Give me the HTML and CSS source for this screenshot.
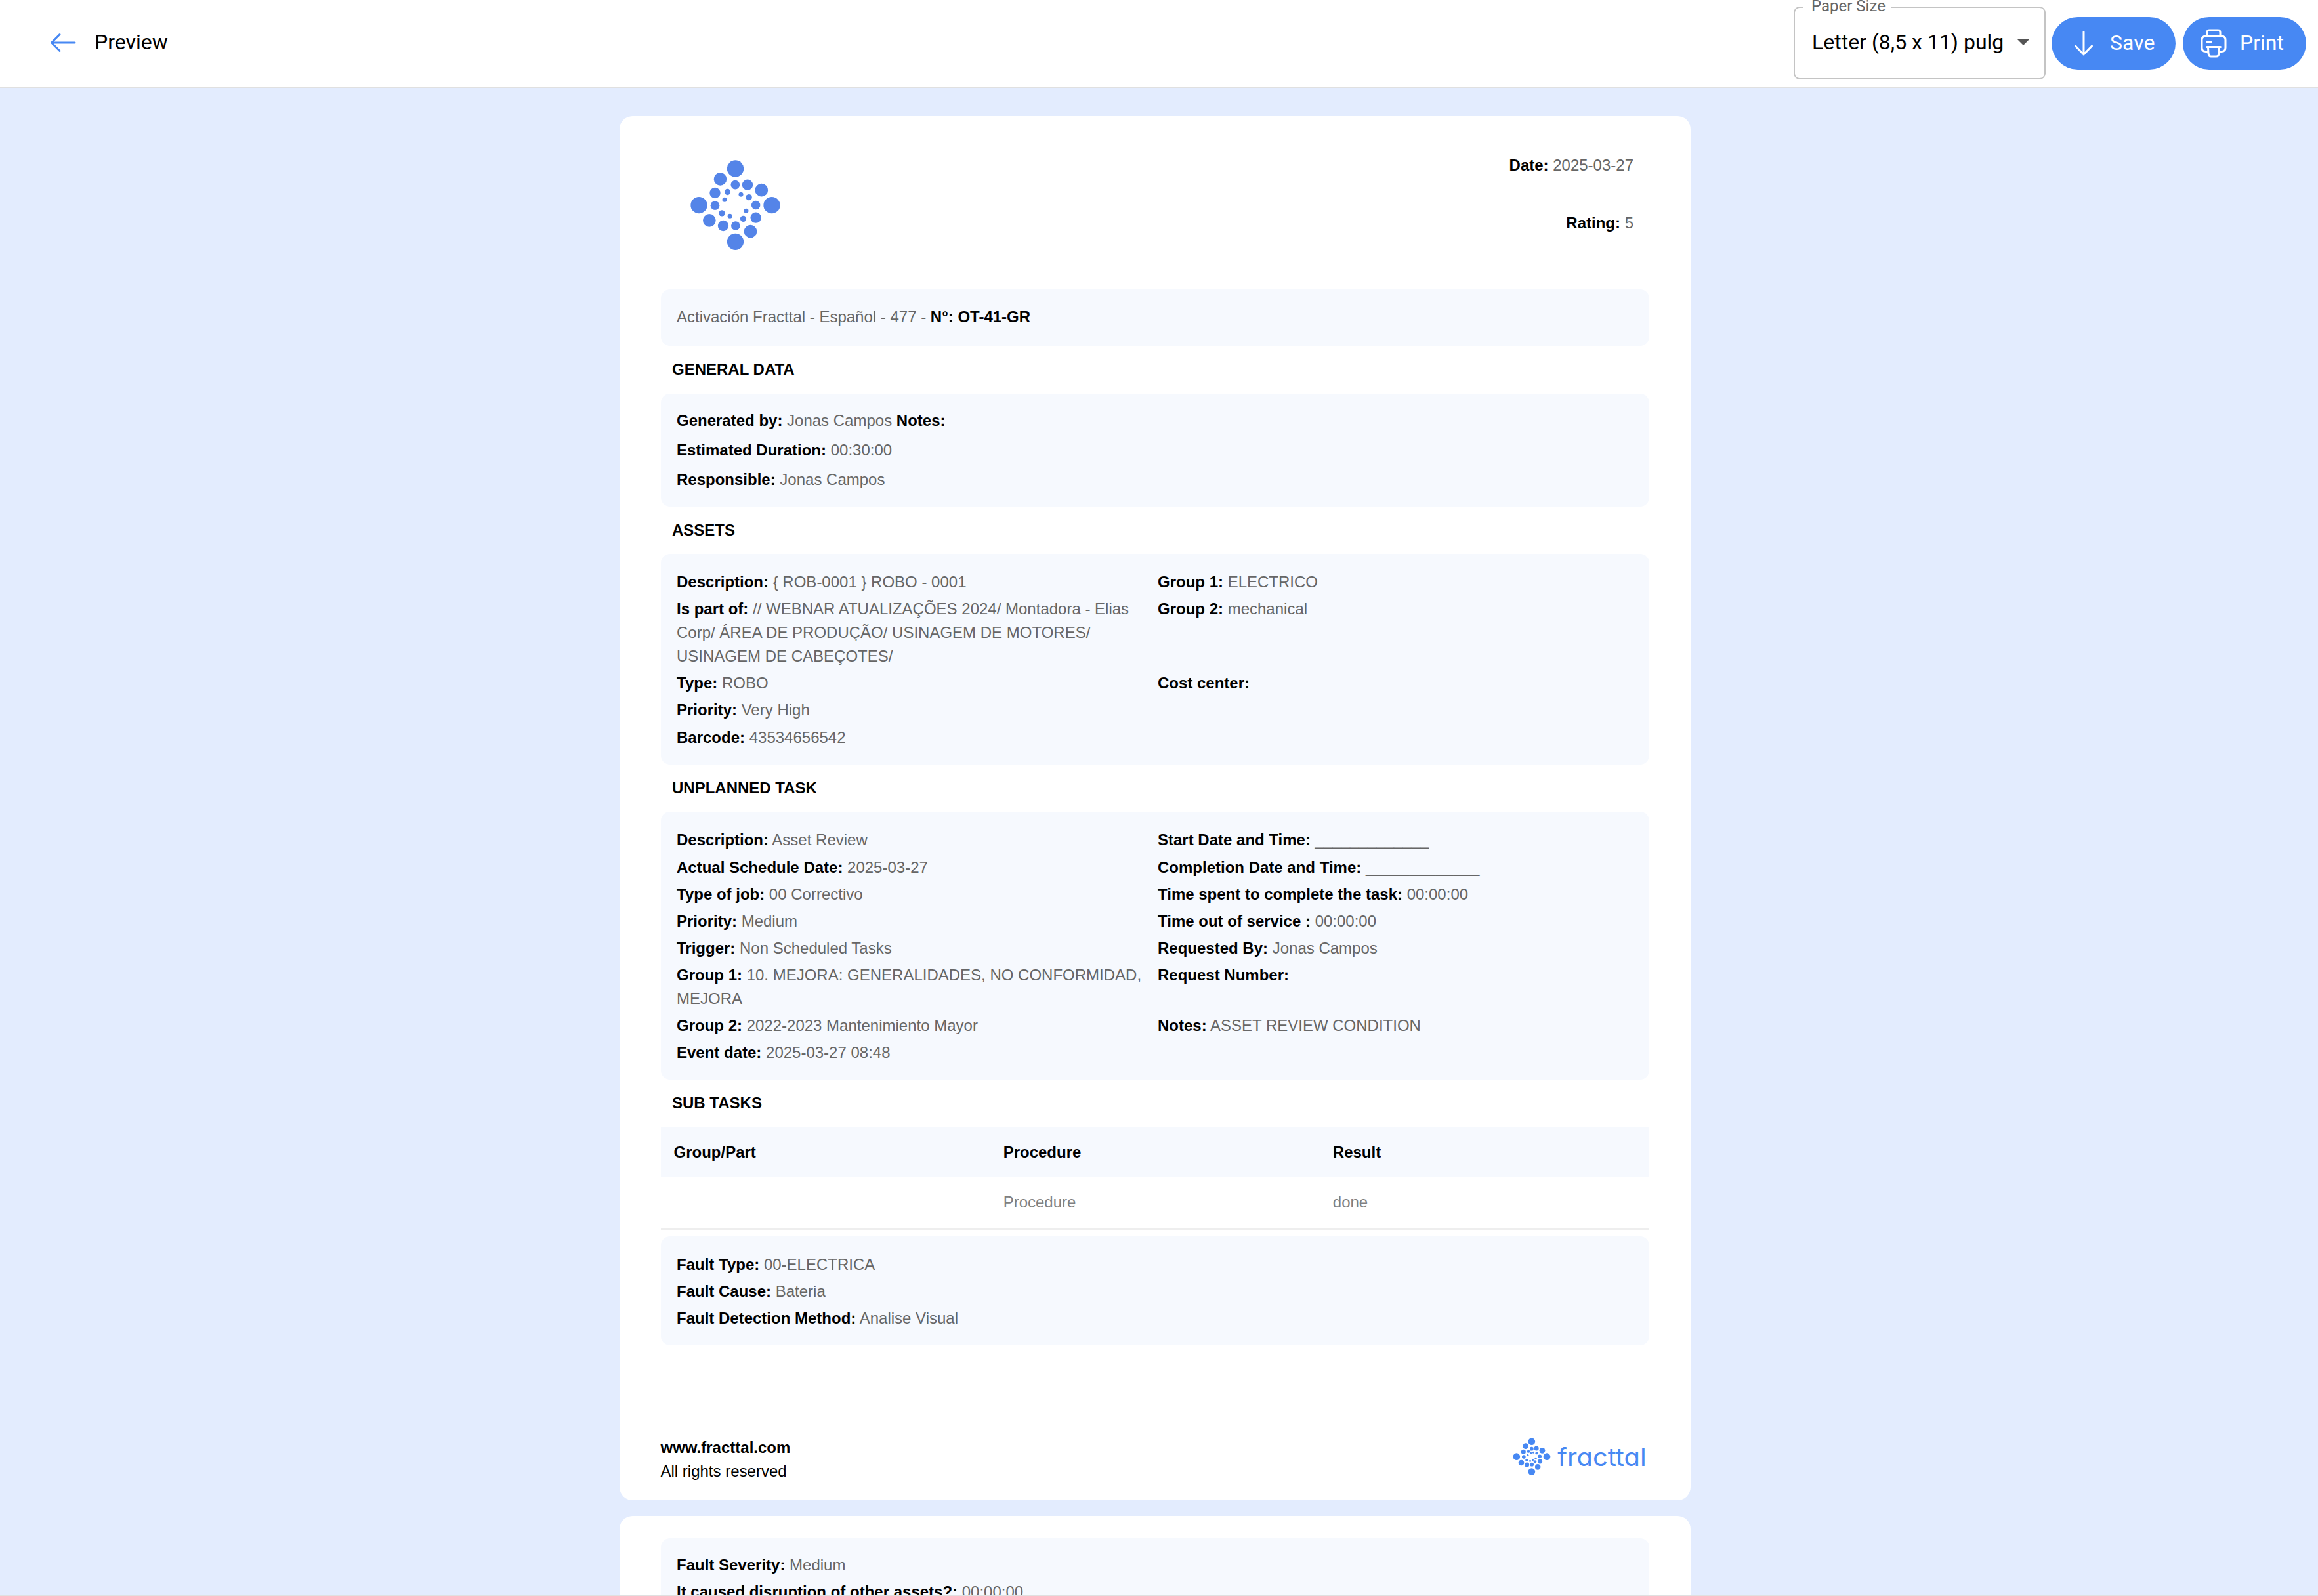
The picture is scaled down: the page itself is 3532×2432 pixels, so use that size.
FILE: index.html
```
<!DOCTYPE html>
<html lang="en">

<head>
    <meta charset="utf-8">
    <title>Preview</title>
    <link rel="stylesheet" href="styles.css">
</head>

<body>

    <header class="topbar">
        <div class="topbar-left">
            <svg class="icon-back" viewBox="0 0 40 30" fill="none">
                <path d="M38 15H3M15 2.500L2.500 15L15 27.500" />
            </svg>
            <span class="title">Preview</span>
        </div>
        <div class="topbar-right">
            <fieldset class="select">
                <legend>Paper Size</legend>
                <span>Letter (8,5 x 11) pulg</span>
                <i class="caret"></i>
            </fieldset>
            <button class="button save">
                <svg class="icon-save" viewBox="0 0 30 40" fill="none">
                    <path d="M15 2.500V37M2.500 24L15 37L27.500 24" />
                </svg>
                <span>Save</span>
            </button>
            <button class="button print">
                <svg class="icon-print" viewBox="0 0 40 44" fill="none">
                    <path d="M10 11V5.500Q10 2 13.500 2H26.500Q30 2 30 5.500V11" />
                    <path d="M11 34.500H8Q2 34.500 2 28.500V17Q2 11 8 11H32Q38 11 38 17V28.500Q38 34.500 32 34.500H28.500" />
                    <path d="M9.500 19.500H16.500M9.500 27.500H30.500" />
                    <path d="M11.500 28L12 37.500Q12.500 42 16 42H24Q27.500 42 28 37.500L28.500 28" />
                </svg>
                <span>Print</span>
            </button>
        </div>
    </header>

    <main class="viewer">

        <section class="sheet">
            <div class="sheet-head">
                <svg class="brand" viewBox="0 0 540 525">
                    <circle cx="271.5" cy="96" r="38" />
                    <circle cx="105" cy="263" r="38" />
                    <circle cx="438" cy="263" r="38" />
                    <circle cx="271.5" cy="430" r="38" />
                    <circle cx="202.5" cy="143.5" r="29.5" />
                    <circle cx="391" cy="194" r="29.5" />
                    <circle cx="152.5" cy="332.5" r="29.5" />
                    <circle cx="340.5" cy="383" r="29.5" />
                    <circle cx="327" cy="170" r="24.5" />
                    <circle cx="178.5" cy="207" r="24.5" />
                    <circle cx="365" cy="320" r="24.5" />
                    <circle cx="216" cy="357" r="24.5" />
                    <circle cx="271" cy="170" r="20.5" />
                    <circle cx="178.5" cy="264.5" r="20.5" />
                    <circle cx="365" cy="262.5" r="20.5" />
                    <circle cx="272.5" cy="357" r="20.5" />
                    <circle cx="235.5" cy="202.5" r="14" />
                    <circle cx="333.5" cy="227" r="14" />
                    <circle cx="210" cy="299.5" r="14" />
                    <circle cx="307.5" cy="325" r="14" />
                    <circle cx="297" cy="214" r="10.5" />
                    <circle cx="222" cy="238" r="10.5" />
                    <circle cx="321" cy="289" r="10.5" />
                    <circle cx="246.5" cy="313" r="10.5" />
                </svg>
                <div class="sheet-info">
                    <p><b>Date:</b> 2025-03-27</p>
                    <p><b>Rating:</b> 5</p>
                </div>
            </div>

            <div class="box order">Activación Fracttal - Español - 477 - <b>N°: OT-41-GR</b></div>

            <h2>GENERAL DATA</h2>
            <div class="box general">
                <p><b>Generated by:</b> Jonas Campos <b>Notes:</b></p>
                <p><b>Estimated Duration:</b> 00:30:00</p>
                <p><b>Responsible:</b> Jonas Campos</p>
            </div>

            <h2>ASSETS</h2>
            <div class="box fields">
                <p><b>Description:</b> { ROB-0001 } ROBO - 0001</p>
                <p><b>Group 1:</b> ELECTRICO</p>
                <p><b>Is part of:</b> // WEBNAR ATUALIZAÇÕES 2024/ Montadora - Elias Corp/ ÁREA DE PRODUÇÃO/ USINAGEM DE MOTORES/ USINAGEM DE CABEÇOTES/</p>
                <p><b>Group 2:</b> mechanical</p>
                <p><b>Type:</b> ROBO</p>
                <p><b>Cost center:</b></p>
                <p class="left"><b>Priority:</b> Very High</p>
                <p class="left"><b>Barcode:</b> 43534656542</p>
            </div>

            <h2>UNPLANNED TASK</h2>
            <div class="box fields">
                <p><b>Description:</b> Asset Review</p>
                <p><b>Start Date and Time:</b> _____________</p>
                <p><b>Actual Schedule Date:</b> 2025-03-27</p>
                <p><b>Completion Date and Time:</b> _____________</p>
                <p><b>Type of job:</b> 00 Correctivo</p>
                <p><b>Time spent to complete the task:</b> 00:00:00</p>
                <p><b>Priority:</b> Medium</p>
                <p><b>Time out of service :</b> 00:00:00</p>
                <p><b>Trigger:</b> Non Scheduled Tasks</p>
                <p><b>Requested By:</b> Jonas Campos</p>
                <p><b>Group 1:</b> 10. MEJORA: GENERALIDADES, NO CONFORMIDAD, MEJORA</p>
                <p><b>Request Number:</b></p>
                <p><b>Group 2:</b> 2022-2023 Mantenimiento Mayor</p>
                <p><b>Notes:</b> ASSET REVIEW CONDITION</p>
                <p class="left"><b>Event date:</b> 2025-03-27 08:48</p>
            </div>

            <h2>SUB TASKS</h2>
            <table class="subtasks">
                <thead>
                    <tr>
                        <th>Group/Part</th>
                        <th>Procedure</th>
                        <th>Result</th>
                    </tr>
                </thead>
                <tbody>
                    <tr>
                        <td></td>
                        <td>Procedure</td>
                        <td>done</td>
                    </tr>
                </tbody>
            </table>

            <div class="box fields">
                <p class="left"><b>Fault Type:</b> 00-ELECTRICA</p>
                <p class="left"><b>Fault Cause:</b> Bateria</p>
                <p class="left"><b>Fault Detection Method:</b> Analise Visual</p>
            </div>

            <footer class="sheet-foot">
                <div class="rights">
                    <p><b>www.fracttal.com</b></p>
                    <p>All rights reserved</p>
                </div>
                <svg class="wordmark" viewBox="0 0 639 210">
                    <circle cx="101.5" cy="35" r="16" />
                    <circle cx="32.5" cy="104" r="16" />
                    <circle cx="171" cy="104" r="16" />
                    <circle cx="101.5" cy="172.5" r="16" />
                    <circle cx="74" cy="56" r="13" />
                    <circle cx="150" cy="76" r="13" />
                    <circle cx="54" cy="132" r="13" />
                    <circle cx="129.5" cy="151" r="13" />
                    <circle cx="123.5" cy="66" r="10.5" />
                    <circle cx="64" cy="82" r="10.5" />
                    <circle cx="140" cy="126" r="10.5" />
                    <circle cx="80" cy="141" r="10.5" />
                    <circle cx="101.5" cy="68" r="8.5" />
                    <circle cx="65.5" cy="105" r="8.5" />
                    <circle cx="138.5" cy="103" r="8.5" />
                    <circle cx="102.5" cy="140" r="8.5" />
                    <circle cx="87" cy="80" r="6.5" />
                    <circle cx="125" cy="87.5" r="6.5" />
                    <circle cx="79" cy="120" r="6.5" />
                    <circle cx="117" cy="127" r="6.5" />
                    <circle cx="98" cy="88" r="4.5" />
                    <circle cx="109.5" cy="84.5" r="4.5" />
                    <circle cx="83.5" cy="97" r="4.5" />
                    <circle cx="120" cy="112" r="4.5" />
                    <circle cx="94.5" cy="124" r="4.5" />
                    <circle cx="106.5" cy="119.5" r="4.5" />
                    <text x="220" y="146" textLength="406" lengthAdjust="spacingAndGlyphs">fracttal</text>
                </svg>
            </footer>
        </section>

        <section class="sheet next">
            <div class="box fields">
                <p class="left"><b>Fault Severity:</b> Medium</p>
                <p class="left"><b>It caused disruption of other assets?:</b> 00:00:00</p>
            </div>
        </section>

    </main>

</body>

</html>
```
FILE: styles.css
```
* {
    margin: 0;
    padding: 0;
    box-sizing: border-box;
}

body {
    height: 2432px;
    display: flex;
    flex-direction: column;
    overflow: hidden;
    background: #fff;
    font-family: "Liberation Sans", Arial, sans-serif;
    font-size: 24px;
    line-height: 36px;
    color: #666;
}

b,
h2,
th {
    color: #000;
    font-weight: bold;
}

/* top bar */

.topbar {
    flex: none;
    height: 134px;
    display: flex;
    justify-content: space-between;
    align-items: flex-start;
    padding: 0 18px 0 76px;
    border-bottom: 1px solid #e0e0e0;
    font-family: Roboto, sans-serif;
    font-size: 32px;
    color: #000;
}

.topbar svg {
    stroke: currentColor;
    stroke-width: 3;
    stroke-linecap: round;
    stroke-linejoin: round;
}

.topbar-left {
    display: flex;
    align-items: center;
    gap: 28px;
    height: 130px;
}

.icon-back {
    width: 40px;
    height: 30px;
    color: #4788f3;
}

.title {
    line-height: 38px;
    padding-bottom: 2px;
}

.topbar-right {
    display: flex;
    align-items: flex-start;
}

.select {
    display: flex;
    align-items: center;
    width: 384px;
    height: 122px;
    margin: -1px 9px 0 0;
    padding: 0 23px 15px 26px;
    border: 2px solid #c4c4c4;
    border-radius: 9px;
}

.select legend {
    margin-left: -13px;
    padding: 0 9px 0 12px;
    height: 24px;
    line-height: 20px;
    font-size: 24px;
    color: #666;
}

.select span {
    flex: 1;
    white-space: nowrap;
}

.caret {
    margin-top: 2px;
    border: 9px solid transparent;
    border-top-color: #555;
    border-bottom: 0;
}

.button {
    display: flex;
    align-items: center;
    height: 80px;
    margin-top: 25.500px;
    border: none;
    border-radius: 40px;
    background: #4788f3;
    font: inherit;
    color: #fff;
}

.button span {
    padding-bottom: 2px;
}

.save {
    width: 189px;
    margin-right: 11px;
    padding-left: 34px;
}

.print {
    width: 188px;
    padding-left: 27px;
}

.icon-save {
    width: 30px;
    height: 40px;
    margin-right: 25px;
}

.icon-print {
    width: 40px;
    height: 44px;
    margin-right: 20px;
}

/* pages */

.viewer {
    flex: 1;
    display: flex;
    flex-direction: column;
    align-items: center;
    gap: 24px;
    min-height: 0;
    padding: 43px 12px 0 0;
    overflow: hidden;
    background: #e3ecfe;
    border-bottom: 1px solid #e0e0e0;
}

.sheet {
    flex: none;
    display: flex;
    flex-direction: column;
    width: 1632px;
    height: 2109px;
    padding: 0 63px 0 62.500px;
    border-radius: 20px;
    background: #fff;
}

.next {
    padding-top: 34px;
}

.next .box {
    padding-top: 23px;
}

.sheet-head {
    flex: none;
    display: flex;
    justify-content: space-between;
    height: 264px;
    padding: 48px 24px 0 23.500px;
}

.brand {
    width: 180px;
    height: 175px;
    fill: #5484e8;
}

.sheet-info {
    display: flex;
    flex-direction: column;
    gap: 52px;
    padding-top: 9px;
    text-align: right;
}

.box {
    padding: 25px 24px 23.300px 24.500px;
    border-radius: 14px;
    background: #f6f9fe;
}

.order {
    padding-top: 24px;
    padding-bottom: 26px;
}

.general {
    display: flex;
    flex-direction: column;
    gap: 9px;
    padding-top: 23px;
    padding-bottom: 23px;
}

.fields {
    display: grid;
    grid-template-columns: 713px 1fr;
    column-gap: 20px;
    row-gap: 5.100px;
}

.fields .left {
    grid-column: 1;
}

h2 {
    height: 72.600px;
    padding-left: 17.500px;
    font-size: 24px;
    line-height: 71px;
}

.subtasks {
    width: 100%;
    margin-bottom: 9px;
    table-layout: fixed;
    border-collapse: collapse;
    text-align: left;
}

.subtasks th {
    height: 75px;
    padding-left: 20px;
    background: #f6f9fe;
}

.subtasks td {
    height: 80px;
    padding-left: 20px;
    border-bottom: 3px solid #eee;
    color: #808080;
}

.sheet-foot {
    display: flex;
    justify-content: space-between;
    height: 76px;
    margin: auto 0 25px;
    color: #000;
}

.rights {
    padding-top: 3px;
}

.wordmark {
    width: 213px;
    height: 70px;
    fill: #4788f3;
}

.wordmark text {
    font-family: Inter, sans-serif;
    font-size: 115px;
    font-weight: 400;
    font-feature-settings: "cv11";
}
```
